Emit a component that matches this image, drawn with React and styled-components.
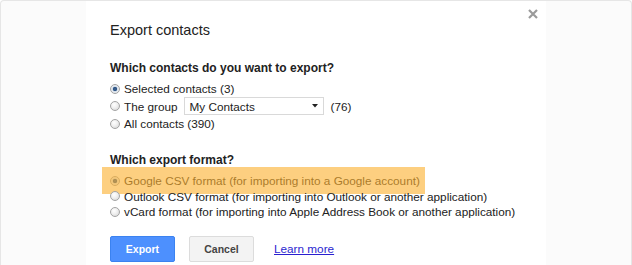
import React from "react";
import styled, { createGlobalStyle } from "styled-components";

const GlobalStyle = createGlobalStyle`
   html, body {
      margin: 0;
      padding: 0;
      background: #ffffff;
   }
`;

const Frame = styled.div`
   box-sizing: border-box;
   width: 632px;
   height: 265px;
   overflow: hidden;
   display: flex;
   padding-left: 85px;
   background-color: #fbfbfb;
   border: 1px solid #e6e6e6;
   border-bottom: none;
   border-radius: 4px 4px 0 0;
   font-family: "Liberation Sans", Arial, sans-serif;
   color: #222222;
`;

const Dialog = styled.div`
   position: relative;
   box-sizing: border-box;
   width: 460px;
   padding: 21px 24px 0 24px;
   background-color: #ffffff;
   display: flex;
   flex-direction: column;
`;

const CloseButton = styled.span`
   position: absolute;
   top: 8px;
   right: 8px;
   width: 10px;
   height: 10px;
   display: flex;
   cursor: pointer;
`;

const Title = styled.div`
   font-size: 14.5px;
   line-height: 17px;
   color: #222222;
`;

const Heading = styled.div`
   margin-top: ${(props) => props.$top}px;
   font-size: 12px;
   line-height: 15px;
   font-weight: 700;
   color: #222222;
`;

const Options = styled.div`
   display: flex;
   flex-direction: column;
   margin-top: ${(props) => props.$top}px;
`;

const Option = styled.label`
   position: relative;
   display: flex;
   align-items: center;
   gap: 4px;
   height: ${(props) => props.$height}px;
   font-size: 11.75px;
   white-space: nowrap;
   cursor: pointer;
`;

const Radio = styled.span`
   box-sizing: border-box;
   flex: none;
   width: 10px;
   height: 10px;
   border-radius: 50%;
   border: 1px solid #a4a4a4;
   background: ${(props) =>
      props.$checked
         ? "radial-gradient(circle at 50% 50%, #3c5f8c 0, #2f5687 1.8px, #dfe6ee 2.6px, #f3f3f3 100%)"
         : "radial-gradient(circle at 40% 35%, #ffffff 0, #f1f1f1 40%, #d4d4d4 100%)"};
`;

const Highlight = styled.span`
   position: absolute;
   top: -6px;
   bottom: -5px;
   left: -8px;
   width: 323px;
   background-color: rgba(251, 178, 50, 0.62);
   pointer-events: none;
`;

const GroupSelect = styled.span`
   box-sizing: border-box;
   display: flex;
   align-items: center;
   justify-content: space-between;
   width: 140px;
   height: 18px;
   margin: 0 3px 0 2px;
   padding: 0 5px 0 5px;
   border: 1px solid #d9d9d9;
   background-color: #ffffff;
   font-size: 11.75px;
`;

const Actions = styled.div`
   display: flex;
   align-items: center;
   margin-top: 16px;
`;

const Button = styled.button`
   box-sizing: border-box;
   width: 65px;
   height: 26px;
   margin-right: ${(props) => props.$gap}px;
   padding: 0;
   border-radius: 2px;
   border: 1px solid ${(props) => (props.$primary ? "#3b82f0" : "#dcdcdc")};
   background: ${(props) => (props.$primary ? "#4d90fe" : "#f3f3f3")};
   color: ${(props) => (props.$primary ? "#ffffff" : "#444444")};
   font-family: "Liberation Sans", Arial, sans-serif;
   font-size: 10.5px;
   font-weight: 700;
   cursor: pointer;
`;

const LearnMore = styled.a`
   font-size: 11.75px;
   color: #2a1fd0;
   text-decoration: underline;
   cursor: pointer;
`;

const CloseIcon = () => (
   <svg width="10" height="10" viewBox="0 0 10 10">
      <path d="M1 1 L9 9 M9 1 L1 9" stroke="#9a9a9a" strokeWidth="2.2" />
   </svg>
);

const Caret = () => (
   <svg width="6" height="4" viewBox="0 0 6 4">
      <path d="M0 0 H6 L3 3.5 Z" fill="#222222" />
   </svg>
);

const App = () => (
   <>
      <GlobalStyle />
      <Frame>
         <Dialog>
            <CloseButton>
               <CloseIcon />
            </CloseButton>
            <Title>Export contacts</Title>

            <Heading $top={22}>Which contacts do you want to export?</Heading>
            <Options $top={4}>
               <Option $height={17}>
                  <Radio $checked />
                  Selected contacts (3)
               </Option>
               <Option $height={18}>
                  <Radio />
                  The group
                  <GroupSelect>
                     My Contacts
                     <Caret />
                  </GroupSelect>
                  (76)
               </Option>
               <Option $height={17}>
                  <Radio />
                  All contacts (390)
               </Option>
            </Options>

            <Heading $top={21}>Which export format?</Heading>
            <Options $top={5}>
               <Option $height={15.5}>
                  <Radio $checked />
                  Google CSV format (for importing into a Google account)
                  <Highlight />
               </Option>
               <Option $height={15.5}>
                  <Radio />
                  Outlook CSV format (for importing into Outlook or another application)
               </Option>
               <Option $height={15.5}>
                  <Radio />
                  vCard format (for importing into Apple Address Book or another application)
               </Option>
            </Options>

            <Actions>
               <Button $primary $gap={14}>Export</Button>
               <Button $gap={20}>Cancel</Button>
               <LearnMore>Learn more</LearnMore>
            </Actions>
         </Dialog>
      </Frame>
   </>
);

export default App;
